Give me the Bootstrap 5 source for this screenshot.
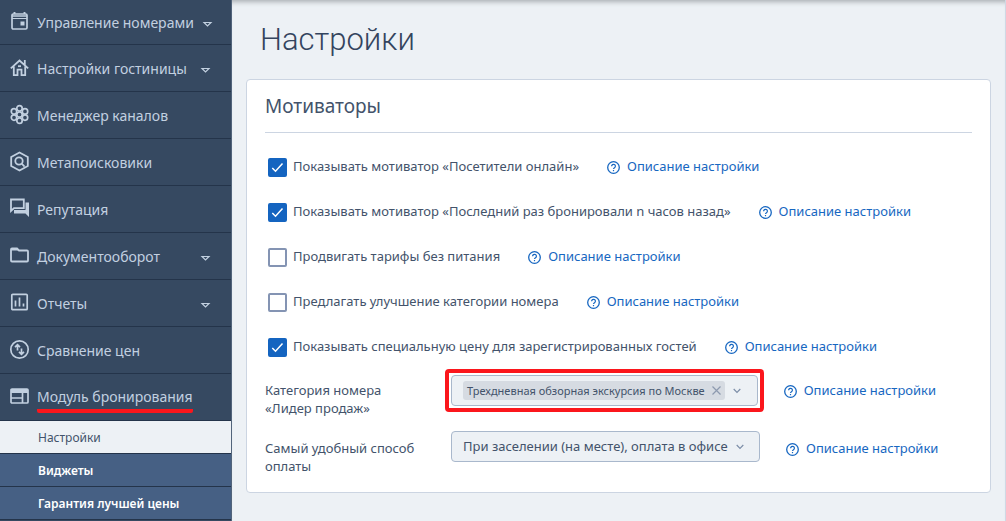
<!DOCTYPE html>
<html lang="ru">
<head>
<meta charset="utf-8">
<meta name="viewport" content="width=device-width, initial-scale=1">
<title>Настройки</title>
<link rel="stylesheet" href="https://cdn.jsdelivr.net/npm/bootstrap@5.3.0/dist/css/bootstrap.min.css">
<style>
body { font-family: "Noto Sans", "Open Sans", sans-serif; font-size: 13px; line-height: 19px; color: #43536b; background: #edf1f5; }
.side { width: 232px; background: #364961; border-right: 1px solid #52647b; }
.side-link { height: 47px; padding: 0 20px 0 10px; gap: 8px; font-size: 14px; font-weight: 400; color: #c2d0e0; text-decoration: none; white-space: nowrap; border-bottom: 1px solid #24344a; }
.side-link:first-child { height: 45px; }
.side-link svg { width: 19px; height: 20px; flex: none; overflow: visible; }
.side-link .tri { width: 11px; height: 7px; margin: 4px 0 0 auto; }
.marked { border-bottom: 4px solid #fb161c; border-radius: 2px; line-height: 24px; margin-top: 4px; }
.sub-link { height: 33px; padding-left: 38px; font-size: 12px; font-weight: 600; color: #fff; background: #466084; border-bottom: 1px solid #24344a; text-decoration: none; }
.sub-link.current { background: #edf1f5; color: #43536b; font-weight: 400; }
.page { box-shadow: inset 0 6px 5px -4px #aaafb3; border-right: 1px solid #d0d8e4; }
.page-title { font-family: Roboto, sans-serif; font-size: 31px; font-weight: 300; line-height: 40px; color: #34445e; margin: 20px 0 19px 28px; }
.panel { background: #fff; border: 1px solid #ccd5e2; border-radius: 4px; margin: 0 14px 28px 14px; padding: 14px 18px 7px; }
.panel h2 { font-size: 19px; font-weight: 400; line-height: 24px; padding-bottom: 14px; border-bottom: 1px solid #ccd5e2; margin: 0 0 11px; }
.option { height: 45px; padding-left: 3px; gap: 28px; }
.option label { padding-left: 6px; }
.option .form-check-input { width: 19px; height: 19px; margin: 1px 0 0; border: 2px solid #8494b3; border-radius: 2px; flex: none; }
.option .form-check-input:checked { background-color: #1464c0; border-color: #1464c0; background-image: url("data:image/svg+xml,%3Csvg xmlns='http://www.w3.org/2000/svg' viewBox='0 0 15 15'%3E%3Cpath d='M2.3 8l3.2 3.2 7-7.6' fill='none' stroke='%23fff' stroke-width='1.5'/%3E%3C/svg%3E"); }
.hint { color: #1767c1; text-decoration: none; gap: 7px; white-space: nowrap; }
.hint svg { width: 13px; height: 13px; margin-top: 2px; }
.field { gap: 26px; height: 58px; }
.field-name { width: 160px; flex: none; line-height: 18px; }
.picker { height: 31px; border: 1px solid #a9b8cc; border-radius: 4px; background: #edf1f5; color: #43536b; }
.multi { padding: 0 16px 0 11px; gap: 8px; font-size: 11px; line-height: 19px; white-space: nowrap; }
.tag { background: #d6dbe2; border-radius: 3px; padding: 0 4px; gap: 7px; }
.accent { border: 4px solid #fb161c; border-radius: 4px; padding: 2px; margin: 0 -6px; }
select.picker { appearance: none; width: 309px; padding: 0 28px 0 11px; background: #edf1f5 url("data:image/svg+xml,%3Csvg xmlns='http://www.w3.org/2000/svg' viewBox='0 0 8 6'%3E%3Cpath d='M.7 1L4 4.3 7.300 1' fill='none' stroke='%237d8ea8' stroke-width='1.200'/%3E%3C/svg%3E") no-repeat right 15px center / 8px 6px; }
</style>
</head>
<body>
<svg class="d-none" aria-hidden="true">
  <symbol id="help" viewBox="0 0 13 13"><circle cx="6.500" cy="6.500" r="5.800" fill="none" stroke="currentColor" stroke-width="1.300"/><path d="M4.600 5.200a1.900 1.800 0 1 1 2.900 1.500c-.7.500-1 .7-1 1.400" fill="none" stroke="currentColor" stroke-width="1.200"/><path d="M5.900 9h1.200v1.200H5.900z" fill="currentColor"/></symbol>
  <symbol id="tri" viewBox="0 0 11 7"><path d="M2 1.500h7L5.500 5z" fill="none" stroke="currentColor" stroke-width="1.200"/></symbol>
</svg>
<div class="d-flex min-vh-100">
  <nav class="side flex-shrink-0" aria-label="Главное меню">
    <a href="#" class="side-link d-flex align-items-center"><svg viewBox="0 0 19 20" fill="none" stroke="currentColor"><rect x="2" y="2" width="15" height="15" rx="1.300" stroke-width="1.700"/><path d="M2 4h15" stroke-width="1.500"/><path d="M2 6.500h15" stroke-width="1"/><path d="M4.500 0v2M14.500 0v2" stroke-width="1.900"/><path d="M10.500 9.500h4v4h-4z" fill="currentColor" stroke="none"/></svg>Управление номерами<svg class="tri"><use href="#tri"/></svg></a>
    <a href="#" class="side-link d-flex align-items-center"><svg viewBox="0 0 19 20" fill="none" stroke="currentColor" stroke-width="1.800"><path d="M.8 10.300L9.500 2.500l8.700 7.800M14.800 2v6M3.800 8.500v8.700h3.700v-5.500h4v5.500h3.700V8.500"/><path d="M8 8.200h3" /></svg>Настройки гостиницы<svg class="tri"><use href="#tri"/></svg></a>
    <a href="#" class="side-link d-flex align-items-center"><svg viewBox="0 0 19 20" fill="none" stroke="currentColor" stroke-width="1.700"><circle cx="9.500" cy="9.500" r="2.700"/><circle cx="9.500" cy="3.300" r="2.700"/><circle cx="9.500" cy="15.700" r="2.700"/><circle cx="4" cy="6.400" r="2.700"/><circle cx="15" cy="6.400" r="2.700"/><circle cx="4" cy="12.600" r="2.700"/><circle cx="15" cy="12.600" r="2.700"/></svg>Менеджер каналов</a>
    <a href="#" class="side-link d-flex align-items-center"><svg viewBox="0 0 19 20" fill="none" stroke="currentColor" stroke-width="1.800"><path d="M9.500.5l8.300 4.500v9l-8.300 4.500L1.200 14V5z"/><circle cx="9" cy="9" r="3.700"/><path d="M11.700 11.700l2.900 2.900"/></svg>Метапоисковики</a>
    <a href="#" class="side-link d-flex align-items-center"><svg viewBox="0 0 19 20" fill="none" stroke="currentColor" stroke-width="1.800"><path d="M1 .5h12.800v8.700H4L1 12z"/><path d="M15.500 3.500H19V18l-3.500-3.500H4V11h11.500z" fill="currentColor" stroke="none"/></svg>Репутация</a>
    <a href="#" class="side-link d-flex align-items-center"><svg viewBox="0 0 19 20" fill="none" stroke="currentColor" stroke-width="1.800"><path d="M1 3.500q0-1 1-1h5l2 2h8q1 0 1 1v9q0 1-1 1H2q-1 0-1-1z"/><path d="M1 2.500h6l2 2H1z" fill="currentColor" stroke="none"/></svg>Документооборот<svg class="tri"><use href="#tri"/></svg></a>
    <a href="#" class="side-link d-flex align-items-center"><svg viewBox="0 0 19 20" fill="none" stroke="currentColor" stroke-width="1.700"><rect x="1.800" y="1.300" width="15.400" height="15.400" rx="1"/><path d="M5.500 7.500v6M9.500 4.500v9M13.500 10.500v3"/></svg>Отчеты<svg class="tri"><use href="#tri"/></svg></a>
    <a href="#" class="side-link d-flex align-items-center"><svg viewBox="0 0 19 20" fill="none" stroke="currentColor" stroke-width="1.700"><circle cx="9.500" cy="9.500" r="8.700"/><path d="M7.500 10.500V5M5 7.200l2.500-2.500L10 7.200M11.500 8.500V14M9 11.800l2.500 2.500 2.500-2.500"/></svg>Сравнение цен</a>
    <a href="#" class="side-link d-flex align-items-center"><svg viewBox="0 0 19 20" fill="none" stroke="currentColor" stroke-width="1.700"><rect x="1" y="2" width="17" height="14" rx="1"/><path d="M1 2h17v4H1z" fill="currentColor" stroke="none"/><path d="M1 11h11M12.500 6v10"/></svg><span class="marked">Модуль бронирования</span></a>
    <a href="#" class="sub-link current d-flex align-items-center" aria-current="page">Настройки</a>
    <a href="#" class="sub-link d-flex align-items-center">Виджеты</a>
    <a href="#" class="sub-link d-flex align-items-center">Гарантия лучшей цены</a>
  </nav>
  <main class="page flex-grow-1">
    <h1 class="page-title">Настройки</h1>
    <form class="panel">
      <h2>Мотиваторы</h2>
      <div class="option d-flex align-items-center"><div class="d-flex"><input class="form-check-input" type="checkbox" id="o1" checked><label for="o1">Показывать мотиватор «Посетители онлайн»</label></div><a href="#" class="hint d-flex align-items-center"><svg><use href="#help"/></svg>Описание настройки</a></div>
      <div class="option d-flex align-items-center"><div class="d-flex"><input class="form-check-input" type="checkbox" id="o2" checked><label for="o2">Показывать мотиватор «Последний раз бронировали n часов назад»</label></div><a href="#" class="hint d-flex align-items-center"><svg><use href="#help"/></svg>Описание настройки</a></div>
      <div class="option d-flex align-items-center"><div class="d-flex"><input class="form-check-input" type="checkbox" id="o3"><label for="o3">Продвигать тарифы без питания</label></div><a href="#" class="hint d-flex align-items-center"><svg><use href="#help"/></svg>Описание настройки</a></div>
      <div class="option d-flex align-items-center"><div class="d-flex"><input class="form-check-input" type="checkbox" id="o4"><label for="o4">Предлагать улучшение категории номера</label></div><a href="#" class="hint d-flex align-items-center"><svg><use href="#help"/></svg>Описание настройки</a></div>
      <div class="option d-flex align-items-center"><div class="d-flex"><input class="form-check-input" type="checkbox" id="o5" checked><label for="o5">Показывать специальную цену для зарегистрированных гостей</label></div><a href="#" class="hint d-flex align-items-center"><svg><use href="#help"/></svg>Описание настройки</a></div>
      <div class="field d-flex align-items-start">
        <label class="field-name pt-2 mt-1" for="category">Категория номера «Лидер продаж»</label>
        <div class="accent"><button type="button" id="category" class="picker multi d-flex align-items-center"><span class="tag d-flex align-items-center">Трехдневная обзорная экскурсия по Москве<svg width="9" height="9" viewBox="0 0 9 9" stroke="#8d9aaf" stroke-width="1.200"><path d="M.5.5l8 8M8.500.5l-8 8"/></svg></span><svg width="8" height="6" viewBox="0 0 8 6" fill="none" stroke="#7d8ea8" stroke-width="1.200"><path d="M.7 1L4 4.300 7.300 1"/></svg></button></div>
        <a href="#" class="hint d-flex align-items-center pt-2 mt-1"><svg><use href="#help"/></svg>Описание настройки</a>
      </div>
      <div class="field d-flex align-items-start">
        <label class="field-name pt-2 mt-1" for="payment">Самый удобный способ оплаты</label>
        <select id="payment" class="picker mt-1"><option>При заселении (на месте), оплата в офисе</option></select>
        <a href="#" class="hint d-flex align-items-center pt-2 mt-1"><svg><use href="#help"/></svg>Описание настройки</a>
      </div>
    </form>
  </main>
</div>
<script src="https://cdn.jsdelivr.net/npm/bootstrap@5.3.0/dist/js/bootstrap.bundle.min.js"></script>
</body>
</html>
